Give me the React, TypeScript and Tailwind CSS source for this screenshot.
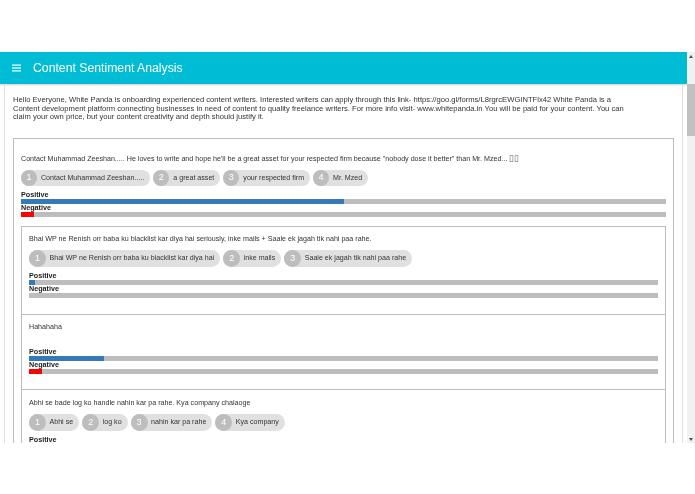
import React from "react";

const font = { fontFamily: '"Liberation Sans", Arial, sans-serif' };

function Chip({ n, text, big }: { n: number; text: string; big?: boolean }) {
  return (
    <div className={`flex items-center rounded-full bg-[#e0e0e0] pr-[6px] ${big ? "h-[17px]" : "h-[16px]"}`}>
      <span className={`flex items-center justify-center rounded-full bg-[#bdbdbd] text-[9px] text-white ${big ? "h-[17px] w-[17px]" : "h-[16px] w-[16px]"}`}>{n}</span>
      <span className={`whitespace-nowrap text-[7.1px] leading-[16px] text-[#333] ${big ? "ml-[3.5px]" : "ml-[4px]"}`}>{text}</span>
    </div>
  );
}

function Bar({ label, value, color }: { label: string; value: number; color: string }) {
  return (
    <div>
      <div className="h-[8px] text-[7.2px] font-bold leading-[8px] text-[#222]">{label}</div>
      <div className="h-[5px] bg-[#bdbdbd]">
        <div className={`h-full ${color}`} style={{ width: `${value}%` }} />
      </div>
    </div>
  );
}

function Body({ text, chips, pos, neg, big }: { text: React.ReactNode; chips: string[]; pos: number; neg: number; big?: boolean }) {
  return (
    <>
      <p className="text-[7.13px] leading-[10px] text-[#333]">{text}</p>
      <div className="mt-[6px] flex gap-[3px]">
        {chips.map((c, i) => (
          <Chip key={c} n={i + 1} text={c} big={big} />
        ))}
      </div>
      <div className={`flex flex-col ${big ? "mt-[5px]" : "mt-[5.5px]"}`}>
        <Bar label="Positive" value={pos} color="bg-[#337ab7]" />
        <Bar label="Negative" value={neg} color="bg-[#ff0000]" />
      </div>
    </>
  );
}

export default function App() {
  return (
    <div className="h-[494px] w-[695px] overflow-hidden bg-white [will-change:transform]" style={font}>
      <div className="h-[52px]" />
      <div className="flex h-[391px]">
        <div className="flex min-w-0 flex-1 flex-col overflow-hidden">
          <header className="flex h-[32px] shrink-0 items-center bg-[#00bcd4] pl-[12px] shadow-[0_1px_2px_rgba(0,0,0,0.2)]">
            <svg width="9" height="8" viewBox="0 0 9 8" fill="white"><rect x="0" y="0.5" width="9" height="1.2" /><rect x="0" y="3.4" width="9" height="1.2" /><rect x="0" y="6.3" width="9" height="1.2" /></svg>
            <h1 className="ml-[12px] text-[12.24px] font-normal leading-none text-white">Content Sentiment Analysis</h1>
          </header>
          <div className="mx-[4px] min-h-0 flex-1 overflow-hidden border-x border-[#e0e0e0] px-[8px] pt-[12px]">
            <p className="w-[613px] text-[7.63px] leading-[8.6px] text-[#333]">
              Hello Everyone, White Panda is onboarding experienced content writers. Interested writers can apply through this link- https://goo.gl/forms/L8rgrcEWGINTFlx42 White Panda is a Content development platform connecting businesses in need of content to quality freelance writers. For more info visit- www.whitepanda.in You will be paid for your content. You can claim your own price, but your content creativity and depth should justify it.
            </p>
            <section className="mt-[16px] border border-[#bdbdbd] px-[7px] pt-[14px]">
              <Body
                text={<>Contact Muhammad Zeeshan..... He loves to write and hope he'll be a great asset for your respected firm because "nobody dose it better" than Mr. Mzed... <span className="text-[9px] text-[#666]">▯▯</span></>}
                chips={["Contact Muhammad Zeeshan.....", "a great asset", "your respected firm", "Mr. Mzed"]}
                pos={50}
                neg={2}
              />
              <div className="mt-[8.5px] border-x border-[#bdbdbd]">
                <div className="border-y border-[#bdbdbd] px-[7px] pb-[16px] pt-[7px]">
                  <Body
                    big
                    text="Bhai WP ne Renish orr baba ku blacklist kar diya hai seriously, inke mails + Saale ek jagah tik nahi paa rahe."
                    chips={["Bhai WP ne Renish orr baba ku blacklist kar diya hai", "inke mails", "Saale ek jagah tik nahi paa rahe"]}
                    pos={1}
                    neg={0}
                  />
                </div>
                <div className="border-b border-[#bdbdbd] px-[7px] pb-[15px] pt-[7px]">
                  <p className="text-[7.13px] leading-[10px] text-[#333]">Hahahaha</p>
                  <div className="mt-[16px] flex flex-col">
                    <Bar label="Positive" value={12} color="bg-[#337ab7]" />
                    <Bar label="Negative" value={2} color="bg-[#ff0000]" />
                  </div>
                </div>
                <div className="px-[7px] pt-[8px]">
                  <Body
                    big
                    text="Abhi se bade log ko handle nahin kar pa rahe. Kya company chalaoge"
                    chips={["Abhi se", "log ko", "nahin kar pa rahe", "Kya company"]}
                    pos={5}
                    neg={2}
                  />
                </div>
              </div>
            </section>
          </div>
        </div>
        <div className="flex w-[8px] shrink-0 flex-col bg-[#f1f1f1]">
          <div className="flex h-[8px] items-center justify-center"><div className="border-x-[2px] border-b-[3px] border-x-transparent border-b-[#505050]" /></div>
          <div className="mt-[24px] h-[52px] bg-[#c1c1c1]" />
          <div className="flex-1" />
          <div className="flex h-[8px] items-center justify-center"><div className="border-x-[2px] border-t-[3px] border-x-transparent border-t-[#505050]" /></div>
        </div>
      </div>
    </div>
  );
}
